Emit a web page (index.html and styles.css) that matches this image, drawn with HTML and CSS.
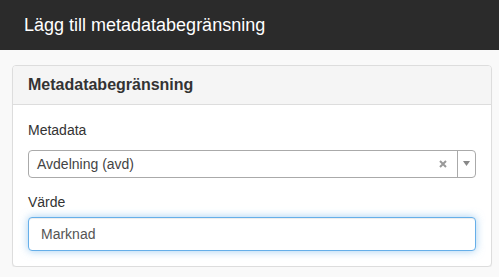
FILE: index.html
```html
<!DOCTYPE html>
<html lang="sv">
<head>
    <meta charset="UTF-8">
    <title>Lägg till metadatabegränsning</title>
    <link rel="stylesheet" href="styles.css">
</head>
<body>
    <div class="modal-header">
        <h4>Lägg till metadatabegränsning</h4>
    </div>

    <div class="panel">
        <div class="panel-heading">
            <h3 class="panel-title">Metadatabegränsning</h3>
        </div>
        <div class="panel-body">
            <div class="form-group">
                <label>Metadata</label>
                <div class="select">
                    <span class="select-value">Avdelning (avd)</span>
                    <span class="select-clear">
                        <svg width="8" height="8" viewBox="0 0 8 8"><path d="M1 1l6 6M7 1L1 7" stroke="#999" stroke-width="2"/></svg>
                    </span>
                    <span class="select-arrow">
                        <svg width="7" height="5" viewBox="0 0 7 5"><path d="M0 0h7L3.5 5z" fill="#888"/></svg>
                    </span>
                </div>
            </div>
            <div class="form-group last">
                <label>Värde</label>
                <input type="text" class="form-control" value="Marknad">
            </div>
        </div>
    </div>
</body>
</html>
```

FILE: styles.css
```css
body {
    margin: 0;
    font-family: "Liberation Sans", Arial, sans-serif;
    font-size: 14px;
    line-height: 20px;
    color: #333;
    background: #f9f9f9;
}
.modal-header {
    height: 50px;
    background: #2b2b2b;
    display: flex;
    align-items: center;
    padding: 0 24px;
}
.modal-header h4 {
    margin: 0;
    color: #fff;
    font-size: 18px;
    font-weight: normal;
}
.panel {
    margin: 15px 7px 0 12px;
    background: #fff;
    border: 1px solid #ddd;
    border-radius: 4px;
    box-shadow: 0 1px 1px rgba(0, 0, 0, 0.05);
}
.panel-heading {
    padding: 10px 15px;
    background: #f5f5f5;
    border-bottom: 1px solid #ddd;
    border-radius: 3px 3px 0 0;
}
.panel-title {
    margin: 0;
    font-size: 16px;
    line-height: 17.6px;
    font-weight: bold;
}
.panel-body {
    padding: 15px;
}
.form-group {
    margin-bottom: 14px;
}
.form-group.last {
    margin-bottom: 0;
}
label {
    display: block;
    margin-bottom: 5px;
}
.select {
    margin-top: 10px;
    height: 28px;
    box-sizing: border-box;
    border: 1px solid #aaa;
    border-radius: 4px;
    display: flex;
    align-items: center;
    color: #444;
}
.select-value {
    flex: 1;
    padding-left: 8px;
    padding-top: 1px;
}
.select-clear {
    display: flex;
    padding-right: 10px;
}
.select-arrow {
    width: 17px;
    height: 100%;
    border-left: 1px solid #aaa;
    display: flex;
    align-items: center;
    justify-content: center;
}
.form-control {
    display: block;
    width: 100%;
    height: 34px;
    box-sizing: border-box;
    padding: 6px 12px;
    font-family: inherit;
    font-size: 14px;
    color: #555;
    background: #fff;
    border: 1px solid #66afe9;
    border-radius: 4px;
    outline: 0;
    box-shadow: inset 0 1px 1px rgba(0, 0, 0, 0.075), 0 0 8px rgba(102, 175, 233, 0.6);
}
```
